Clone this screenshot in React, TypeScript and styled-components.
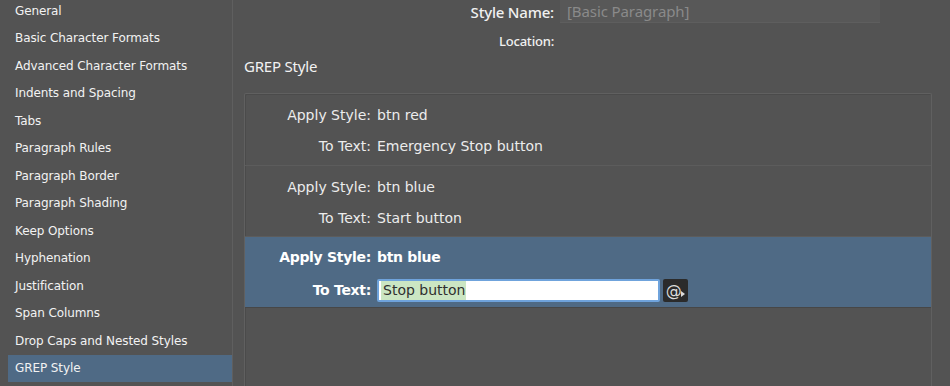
import React from "react";
import styled, { createGlobalStyle } from "styled-components";

const GlobalStyle = createGlobalStyle`
  html, body {
    margin: 0;
    padding: 0;
    background: #535353;
    overflow: hidden;
  }
  body {
    font-family: "DejaVu Sans", "Noto Sans", sans-serif;
    color: #ececec;
  }
`;

const categories = [
  "General",
  "Basic Character Formats",
  "Advanced Character Formats",
  "Indents and Spacing",
  "Tabs",
  "Paragraph Rules",
  "Paragraph Border",
  "Paragraph Shading",
  "Keep Options",
  "Hyphenation",
  "Justification",
  "Span Columns",
  "Drop Caps and Nested Styles",
  "GREP Style",
];

interface GrepRule {
  style: string;
  text: string;
}

const rules: GrepRule[] = [
  { style: "btn red", text: "Emergency Stop button" },
  { style: "btn blue", text: "Start button" },
  { style: "btn blue", text: "Stop button" },
];

const Window = styled.div`
  display: flex;
  width: 950px;
  height: 386px;
  overflow: hidden;
  background: #535353;
`;

const Sidebar = styled.ul`
  list-style: none;
  margin: 0;
  padding: 0 0 0 8px;
  width: 224px;
  flex-shrink: 0;
  border-right: 1px solid #5f5f5f;
  display: flex;
  flex-direction: column;
`;

const SideItem = styled.li<{ $active?: boolean }>`
  height: 27.5px;
  flex-shrink: 0;
  display: flex;
  align-items: center;
  padding-left: 7px;
  font-size: 12px;
  letter-spacing: -0.1px;
  color: #f2f2f2;
  background: ${(p) => (p.$active ? "#4f6a85" : "transparent")};
  &:first-child {
    margin-top: -3px;
  }
`;

const Main = styled.div`
  box-sizing: border-box;
  width: 717px;
  flex-shrink: 0;
  min-width: 0;
  padding-left: 11px;
  padding-right: 18px;
  display: flex;
  flex-direction: column;
`;

const HeaderGrid = styled.div`
  display: grid;
  grid-template-columns: 310px 320px;
  column-gap: 6px;
  align-items: center;
`;

const HeaderLabel = styled.div<{ $h: number; $main?: boolean }>`
  height: ${(p) => p.$h}px;
  display: flex;
  align-items: center;
  justify-content: flex-end;
  font-family: "Noto Sans", sans-serif;
  font-size: ${(p) => (p.$main ? 15 : 13)}px;
  font-weight: 500;
  letter-spacing: -0.2px;
  color: #f0f0f0;
`;

const NameField = styled.div`
  height: 22px;
  display: flex;
  align-items: center;
  padding-left: 7px;
  background: #585858;
  border-bottom: 1px solid #5e5e5e;
  font-family: "Noto Sans", sans-serif;
  font-size: 15px;
  letter-spacing: -0.1px;
  color: #8a8a8a;
`;

const SectionTitle = styled.div`
  height: 14px;
  display: flex;
  align-items: center;
  font-family: "Noto Sans", sans-serif;
  font-size: 15px;
  letter-spacing: -0.2px;
  color: #f2f2f2;
`;

const RuleList = styled.div`
  margin-top: 20px;
  flex: 1;
  min-width: 0;
  border: 1px solid #606060;
  border-bottom: none;
  border-radius: 2px 2px 0 0;
  box-shadow: inset 1px 1px 0 #4b4b4b;
  display: flex;
  flex-direction: column;
  overflow: hidden;
`;

const RuleRow = styled.div<{ $active?: boolean }>`
  height: 71px;
  flex-shrink: 0;
  box-sizing: border-box;
  padding-top: ${(p) => (p.$active ? 4 : 5)}px;
  display: grid;
  grid-template-columns: 126px minmax(0, 1fr);
  grid-template-rows: ${(p) => (p.$active ? "32px 34px" : "31px 31px")};
  column-gap: 6px;
  align-content: start;
  align-items: center;
  border-bottom: 1px solid ${(p) => (p.$active ? "#474747" : "#5c5c5c")};
  background: ${(p) => (p.$active ? "#4f6a85" : "transparent")};
  font-size: 14px;
  font-weight: ${(p) => (p.$active ? 700 : 400)};
  letter-spacing: ${(p) => (p.$active ? "-0.3px" : "0")};
  color: ${(p) => (p.$active ? "#ffffff" : "#ececec")};
  &:first-child {
    height: 72px;
  }
`;

const RuleLabel = styled.div`
  text-align: right;
  white-space: nowrap;
`;

const RuleValue = styled.div`
  display: flex;
  align-items: center;
  gap: 3px;
  white-space: nowrap;
`;

const TextField = styled.div`
  box-sizing: border-box;
  width: 283px;
  height: 23px;
  display: flex;
  align-items: center;
  padding-left: 2px;
  background: #ffffff;
  border: 2px solid #6fa3dc;
  border-radius: 2px;
  font-weight: 400;
  letter-spacing: 0;
  font-size: 14px;
  color: #2f2f2f;
`;

const Selected = styled.span`
  background: #cbe6c3;
  padding: 0 1px 0 2px;
  line-height: 19px;
`;

const SymbolButton = styled.div`
  position: relative;
  box-sizing: border-box;
  width: 25px;
  height: 23px;
  background: #2b2b2b;
  border-radius: 2px;
  display: flex;
  align-items: center;
  justify-content: center;
  padding-right: 4px;
  font-weight: 400;
  font-size: 16px;
  color: #dcdcdc;
`;

const Caret = styled.span`
  position: absolute;
  right: 3px;
  bottom: 5px;
  width: 0;
  height: 0;
  border-top: 3px solid transparent;
  border-bottom: 3px solid transparent;
  border-left: 4px solid #dcdcdc;
`;

export default function App() {
  return (
    <>
      <GlobalStyle />
      <Window>
        <Sidebar>
          {categories.map((c) => (
            <SideItem key={c} $active={c === "GREP Style"}>
              {c}
            </SideItem>
          ))}
        </Sidebar>
        <Main>
          <HeaderGrid>
            <HeaderLabel $h={22} $main>
              Style Name:
            </HeaderLabel>
            <NameField>[Basic Paragraph]</NameField>
            <HeaderLabel $h={36}>Location:</HeaderLabel>
            <div />
          </HeaderGrid>
          <SectionTitle>GREP Style</SectionTitle>
          <RuleList>
            {rules.map((r, i) => {
              const active = i === rules.length - 1;
              return (
                <RuleRow key={i} $active={active}>
                  <RuleLabel>Apply Style:</RuleLabel>
                  <RuleValue>{r.style}</RuleValue>
                  <RuleLabel>To Text:</RuleLabel>
                  <RuleValue>
                    {active ? (
                      <>
                        <TextField>
                          <Selected>{r.text}</Selected>
                        </TextField>
                        <SymbolButton>
                          @<Caret />
                        </SymbolButton>
                      </>
                    ) : (
                      r.text
                    )}
                  </RuleValue>
                </RuleRow>
              );
            })}
          </RuleList>
        </Main>
      </Window>
    </>
  );
}
